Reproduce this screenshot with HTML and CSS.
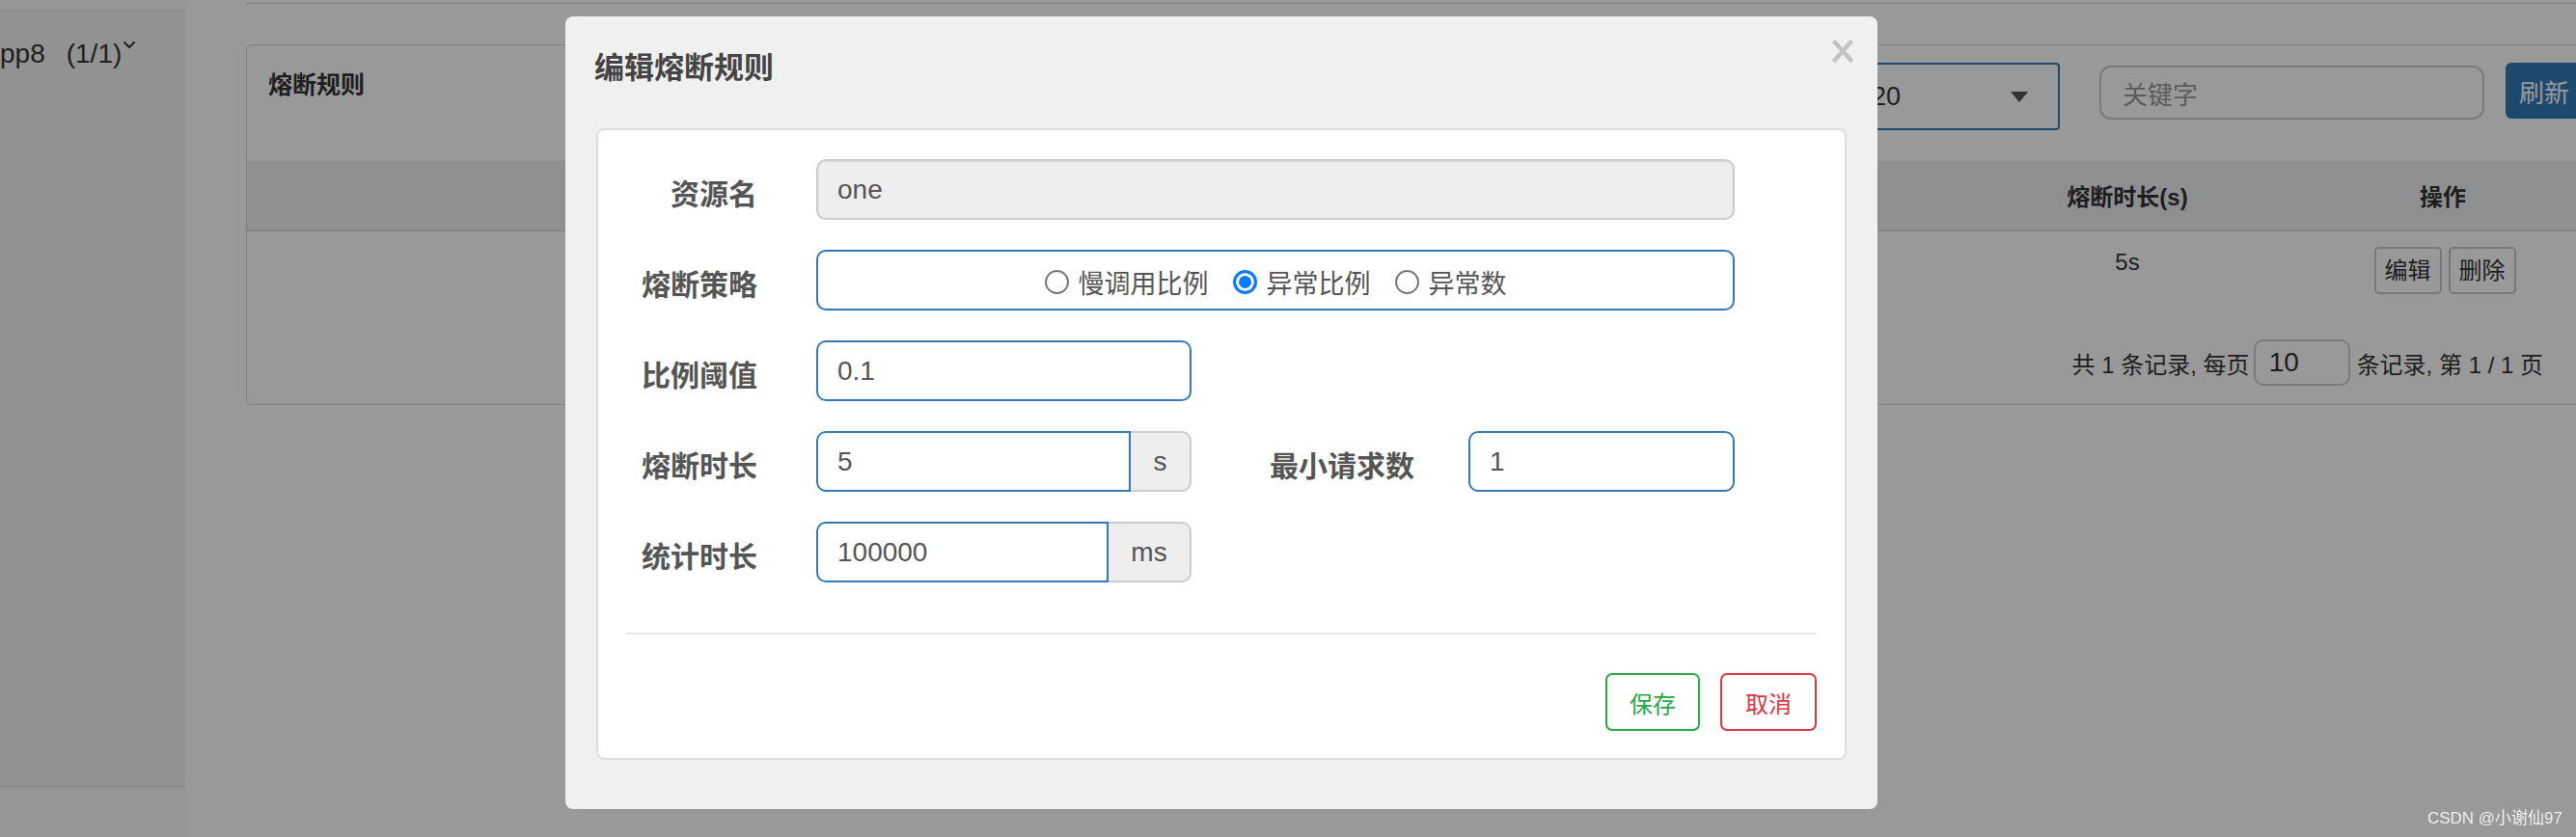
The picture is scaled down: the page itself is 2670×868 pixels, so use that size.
FILE: index.html
```html
<!DOCTYPE html>
<html lang="zh-CN">
<head>
<meta charset="utf-8">
<title>编辑熔断规则</title>
<link rel="stylesheet" href="styles.css">
</head>
<body>
<div class="page">
  <aside class="sidebar">
    <div class="app-item">
      <span class="app-name">pp8</span><span class="app-count">(1/1)</span><svg class="chev" width="14" height="9" viewBox="0 0 14 9"><polyline points="1.5,1.5 7,7 12.5,1.5" fill="none" stroke="#333" stroke-width="2"/></svg>
    </div>
  </aside>
  <main class="main">
    <div class="topline"></div>
    <section class="card">
      <div class="card-head">
        <div class="card-title">熔断规则</div>
        <div class="toolbar">
          <div class="select"><span>20</span><span class="caret"></span></div>
          <div class="kw">关键字</div>
          <div class="btn-refresh">刷新</div>
        </div>
      </div>
      <table class="rules">
        <colgroup>
          <col class="c1"><col class="c2"><col class="c3"><col class="c4"><col class="c5">
        </colgroup>
        <thead>
          <tr><th></th><th></th><th></th><th>熔断时长(s)</th><th>操作</th></tr>
        </thead>
        <tbody>
          <tr>
            <td></td><td></td><td></td><td>5s</td>
            <td><div class="ops"><span class="row-btn">编辑</span><span class="row-btn">删除</span></div></td>
          </tr>
        </tbody>
      </table>
      <div class="pager">
        <span>共 1 条记录, 每页</span>
        <span class="pager-input">10</span>
        <span>条记录, 第 1 / 1 页</span>
      </div>
    </section>
  </main>
</div>

<div class="backdrop"></div>

<div class="modal">
  <div class="modal-head">
    <h4 class="modal-title">编辑熔断规则</h4>
    <span class="close"><svg width="22" height="24" viewBox="0 0 22 24"><path d="M3 3 L19 21 M19 3 L3 21" stroke="#c3c3c3" stroke-width="4.5" stroke-linecap="square" fill="none"/></svg></span>
  </div>
  <div class="modal-body">
    <div class="form-row">
      <label class="label">资源名</label>
      <div class="ctrl"><input class="input readonly w-full" value="one" readonly></div>
    </div>
    <div class="form-row">
      <label class="label">熔断策略</label>
      <div class="ctrl">
        <div class="radio-box">
          <label class="radio-opt"><input type="radio" name="s" class="dot">慢调用比例</label>
          <label class="radio-opt"><input type="radio" name="s" class="dot" checked>异常比例</label>
          <label class="radio-opt"><input type="radio" name="s" class="dot">异常数</label>
        </div>
      </div>
    </div>
    <div class="form-row">
      <label class="label">比例阈值</label>
      <div class="ctrl"><input class="input w-half" value="0.1"></div>
    </div>
    <div class="form-row">
      <label class="label">熔断时长</label>
      <div class="ctrl group">
        <input class="input" value="5">
        <span class="addon addon-s">s</span>
      </div>
      <label class="label label-wide">最小请求数</label>
      <div class="ctrl-near"><input class="input w-small" value="1"></div>
    </div>
    <div class="form-row">
      <label class="label">统计时长</label>
      <div class="ctrl group">
        <input class="input" value="100000">
        <span class="addon addon-ms">ms</span>
      </div>
    </div>
    <hr class="divider">
    <div class="modal-foot">
      <button class="btn btn-save">保存</button>
      <button class="btn btn-cancel">取消</button>
    </div>
  </div>
</div>

<div class="watermark">CSDN @小谢仙97</div>
</body>
</html>
```

FILE: styles.css
```css
html, body {
  margin: 0;
  padding: 0;
}
body {
  width: 2670px;
  height: 868px;
  overflow: hidden;
  background: #fff;
  color: #333;
  font-family: "Liberation Sans", "Noto Sans CJK SC", sans-serif;
}

/* ---------- background page ---------- */
.page {
  display: flex;
  height: 868px;
}
.sidebar {
  width: 192px;
  flex: none;
  background: #f8f8f8;
}
.app-item {
  margin-top: 11px;
  height: 805px;
  box-sizing: border-box;
  border-top: 1px solid #e0e0e0;
  border-bottom: 1px solid #dcdcdc;
  background: #f3f3f3;
  padding-top: 28px;
  font-size: 28px;
  line-height: 32px;
  white-space: nowrap;
  color: #333;
}
.app-count {
  margin-left: 22px;
}
.chev {
  vertical-align: 14px;
  margin-left: 1px;
}
.main {
  flex: 1;
  min-width: 0;
  padding-left: 63px;
}
.topline {
  width: 2440px;
  height: 3px;
  border-bottom: 1px solid #d0d0d0;
}
.card {
  margin-top: 42px;
  width: 2440px;
  box-sizing: border-box;
  border: 1px solid #d3d3d3;
  border-radius: 6px;
}
.card-head {
  display: flex;
  height: 120px;
  box-sizing: border-box;
  padding: 18px 0 0 22px;
}
.card-title {
  font-size: 25px;
  font-weight: bold;
  line-height: 30px;
  margin-top: 8px;
  color: #333;
}
.toolbar {
  margin-left: auto;
  display: flex;
  align-items: flex-start;
}
.select {
  width: 215px;
  height: 70px;
  box-sizing: border-box;
  border: 2px solid #337ab7;
  border-radius: 4px;
  background: #fff;
  display: flex;
  align-items: center;
  justify-content: space-between;
  padding: 0 31px 0 18px;
  font-size: 27px;
  color: #333;
}
.caret {
  width: 0;
  height: 0;
  border-left: 9px solid transparent;
  border-right: 9px solid transparent;
  border-top: 11px solid #555;
}
.kw {
  margin-left: 41px;
  margin-top: 3px;
  width: 399px;
  height: 56px;
  box-sizing: border-box;
  border: 2px solid #ccc;
  border-radius: 12px;
  padding-left: 22px;
  display: flex;
  align-items: center;
  font-size: 26px;
  color: #999;
}
.btn-refresh {
  margin-left: 22px;
  width: 97px;
  height: 58px;
  box-sizing: border-box;
  background: #337ab7;
  border-radius: 6px;
  color: #fff;
  font-size: 26px;
  display: flex;
  align-items: center;
  padding-left: 14px;
}
.rules {
  width: 100%;
  border-collapse: collapse;
  table-layout: fixed;
}
.c1 { width: 800px; }
.c2 { width: 500px; }
.c3 { width: 484px; }
.c4 { width: 330px; }
.c5 { width: 324px; }
.rules th {
  height: 71px;
  padding: 0;
  background: #eceef2;
  border-bottom: 2px solid #dcdcdc;
  font-size: 24px;
  font-weight: bold;
  text-align: center;
  color: #333;
}
.rules td {
  height: 81px;
  box-sizing: border-box;
  padding: 16px 0 0;
  vertical-align: top;
  text-align: center;
  font-size: 24px;
  line-height: 32px;
  color: #333;
}
.ops {
  display: flex;
  justify-content: center;
  gap: 7px;
  padding-left: 4px;
}
.row-btn {
  width: 70px;
  height: 49px;
  box-sizing: border-box;
  border: 2px solid #c8c8c8;
  border-radius: 5px;
  background: #fff;
  font-size: 24px;
  line-height: 45px;
  text-align: center;
}
.pager {
  display: flex;
  justify-content: flex-end;
  align-items: center;
  margin-top: 32px;
  padding: 0 58px 19px 0;
  font-size: 24px;
  color: #333;
}
.pager-input {
  width: 100px;
  height: 48px;
  box-sizing: border-box;
  border: 2px solid #ccc;
  border-radius: 10px;
  margin: 0 7px 0 4px;
  padding-left: 14px;
  display: flex;
  align-items: center;
  font-size: 28px;
}

/* ---------- modal ---------- */
.backdrop {
  position: fixed;
  inset: 0;
  background: rgba(0, 0, 0, 0.4);
}
.modal {
  position: fixed;
  left: 586px;
  top: 17px;
  width: 1360px;
  box-sizing: border-box;
  padding: 0 32px 51px;
  background: #f0f0f0;
  border-radius: 8px;
}
.modal-head {
  height: 116px;
  box-sizing: border-box;
  padding-top: 36px;
  display: flex;
  align-items: flex-start;
}
.modal-title {
  margin: 0 0 0 -2px;
  font-size: 31px;
  line-height: 36px;
  font-weight: bold;
  color: #444;
}
.close {
  margin-left: auto;
  margin-top: -12px;
  margin-right: -7px;
  display: block;
  line-height: 0;
}
.modal-body {
  background: #fff;
  border: 2px solid #ddd;
  border-radius: 8px;
  padding: 30px 29px 28px;
}
.form-row {
  display: flex;
  align-items: center;
  height: 63px;
  margin-bottom: 31px;
}
.form-row:nth-last-of-type(1) {
  margin-bottom: 0;
}
.label {
  width: 136px;
  flex: none;
  text-align: right;
  font-size: 30px;
  font-weight: bold;
  color: #555;
  white-space: nowrap;
  padding-top: 4px;
}
.label-wide {
  width: 231px;
}
.ctrl {
  margin-left: 61px;
  display: flex;
}
.ctrl-near {
  margin-left: 56px;
  display: flex;
}
.input {
  height: 63px;
  box-sizing: border-box;
  border: 2px solid #337ab7;
  border-radius: 10px;
  background: #fff;
  padding: 0 0 0 20px;
  margin: 0;
  font-family: "Liberation Sans", "Noto Sans CJK SC", sans-serif;
  font-size: 28px;
  color: #555;
  outline: none;
}
.input.readonly {
  background: #eee;
  border-color: #ccc;
  box-shadow: inset 0 1px 2px rgba(0, 0, 0, 0.08);
}
.w-full { width: 952px; }
.w-half { width: 389px; }
.w-small { width: 276px; }
.group {
  width: 389px;
  height: 63px;
}
.group .input {
  flex: 1;
  min-width: 0;
  width: auto;
  border-radius: 10px 0 0 10px;
}
.addon {
  flex: none;
  box-sizing: border-box;
  background: #eee;
  border: 2px solid #ccc;
  border-left: none;
  border-radius: 0 10px 10px 0;
  display: flex;
  align-items: center;
  justify-content: center;
  font-size: 28px;
  color: #555;
}
.addon-s { width: 63px; }
.addon-ms { width: 86px; }
.radio-box {
  width: 952px;
  height: 63px;
  box-sizing: border-box;
  border: 2px solid #337ab7;
  border-radius: 10px;
  display: flex;
  align-items: center;
  justify-content: center;
  gap: 25px;
  padding-top: 4px;
  font-size: 27px;
  color: #555;
}
.radio-opt {
  display: flex;
  align-items: center;
  gap: 10px;
}
.dot {
  appearance: none;
  -webkit-appearance: none;
  margin: 0;
  width: 25px;
  height: 25px;
  box-sizing: border-box;
  border-radius: 50%;
  border: 2px solid #777;
  background: #fff;
}
.dot:checked {
  border: 3px solid #0a7bff;
  background: #0a7bff;
  box-shadow: inset 0 0 0 3px #fff;
}
.divider {
  margin: 52px 0 0;
  border: none;
  height: 2px;
  background: #e5e5e5;
}
.modal-foot {
  display: flex;
  justify-content: flex-end;
  gap: 21px;
  margin-top: 40px;
}
.btn {
  height: 60px;
  box-sizing: border-box;
  background: #fff;
  border: 2px solid;
  border-radius: 7px;
  font-family: "Liberation Sans", "Noto Sans CJK SC", sans-serif;
  font-size: 24px;
  padding: 0;
  display: flex;
  align-items: center;
  justify-content: center;
}
.btn-save {
  width: 98px;
  color: #28a745;
  border-color: #28a745;
}
.btn-cancel {
  width: 100px;
  color: #dc3545;
  border-color: #dc3545;
}
.watermark {
  position: fixed;
  right: 14px;
  bottom: 9px;
  font-size: 17px;
  line-height: 20px;
  color: rgba(255, 255, 255, 0.85);
}
```
